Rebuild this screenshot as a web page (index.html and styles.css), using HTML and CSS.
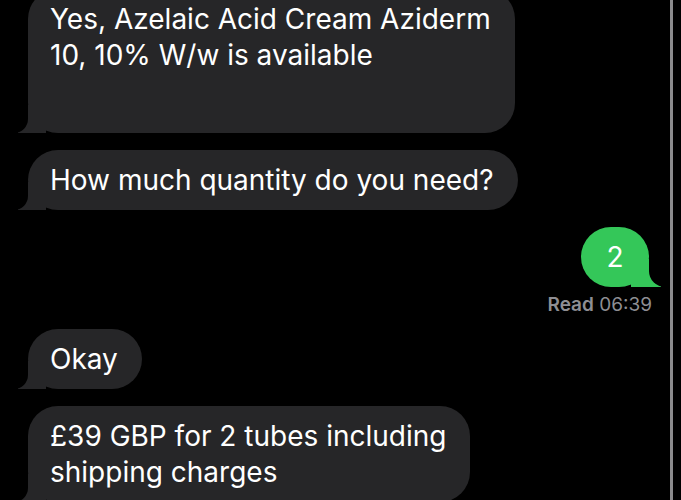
FILE: index.html
```html
<!DOCTYPE html>
<html lang="en">
<head>
    <meta charset="UTF-8">
    <meta name="viewport" content="width=device-width, initial-scale=1.0">
    <link rel="stylesheet" href="styles.css">
    <title>Messages</title>
</head>

<body>
    <div class="screen">
        <main class="thread">
            <div class="msg them tall">Yes, Azelaic Acid Cream Aziderm<br>10, 10% W/w is available</div>
            <div class="msg them">How much quantity do you need?</div>

            <div class="sent">
                <div class="msg me">2</div>
                <div class="receipt"><b>Read</b> 06:39</div>
            </div>

            <div class="msg them">Okay</div>
            <div class="msg them">£39 GBP for 2 tubes including<br>shipping charges</div>
        </main>
        <div class="edge"></div>
    </div>
</body>
</html>
```

FILE: styles.css
```css
* {
    box-sizing: border-box;
}

html, body {
    margin: 0;
    height: 100%;
    background: #000;
}

body {
    overflow: hidden;
    font-family: Inter, "Noto Sans", sans-serif;
    color: #fff;
}

.screen {
    display: flex;
    height: 100vh;
}

.thread {
    flex: 1;
    display: flex;
    flex-direction: column;
    gap: 17px;
    margin-top: -11px;
    padding: 0 21px 0 28px;
}

.edge {
    width: 3px;
    margin-right: 8px;
    background: #8a8a8c;
}

/* bubbles */
.msg {
    position: relative;
    max-width: 500px;
    padding: 12px 24px 12px 22px;
    border-radius: 30px;
    font-size: 28px;
    line-height: 36px;
}

.msg::before,
.msg::after {
    content: "";
    position: absolute;
    bottom: 0;
    height: 28px;
}

.them {
    align-self: flex-start;
    background: #262628;
}

.them::before {
    left: -10px;
    width: 28px;
    background: #262628;
}

.them::after {
    left: -14px;
    width: 14px;
    background: #000;
    border-bottom-right-radius: 14px;
}

.tall {
    padding-bottom: 60px;
}

.sent {
    display: flex;
    flex-direction: column;
    align-items: flex-end;
    gap: 7px;
}

.me {
    min-width: 68px;
    padding: 12px 22px;
    text-align: center;
    background: #34c759;
}

.me::before {
    right: -12px;
    width: 30px;
    background: #34c759;
}

.me::after {
    right: -16px;
    width: 16px;
    background: #000;
    border-bottom-left-radius: 16px;
}

.receipt {
    margin: 0 -3px -4px 0;
    font-size: 19px;
    line-height: 22px;
    color: #8e8e93;
}

.receipt b {
    font-weight: 600;
}
```
